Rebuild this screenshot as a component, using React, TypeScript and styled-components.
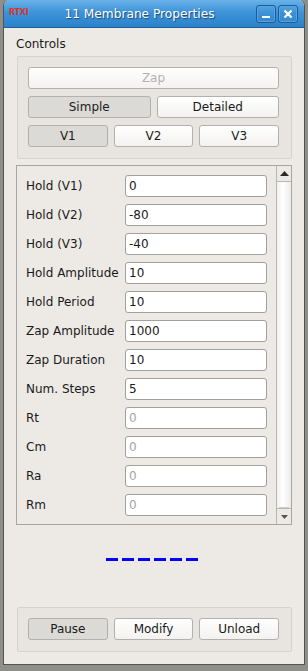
import React from 'react';
import styled, { createGlobalStyle } from 'styled-components';

const GlobalStyle = createGlobalStyle`
  html, body {
    margin: 0;
    padding: 0;
    background: #8e8e8a;
  }
  body {
    font-family: "DejaVu Sans", "Liberation Sans", sans-serif;
    font-size: 12px;
    color: #1a1a1a;
  }
`;

const Desktop = styled.div`
  width: 308px;
  height: 671px;
  padding-left: 3px;
  box-sizing: border-box;
`;

const Window = styled.div`
  width: 302px;
  height: 665px;
  box-sizing: border-box;
  border: 1px solid #55554f;
  border-top: none;
  border-radius: 6px 6px 0 0;
  overflow: hidden;
  display: flex;
  flex-direction: column;
  background: #edeae6;
`;

const TitleBar = styled.div`
  height: 28px;
  flex: none;
  display: flex;
  align-items: center;
  padding: 0 6px 0 5px;
  background: linear-gradient(#6ab2ea 0%, #3d93d8 45%, #2d83cb 100%);
  border-bottom: 1px solid #1f5f96;
  box-sizing: border-box;
`;

const Logo = styled.span`
  width: 26px;
  font-size: 8px;
  font-weight: bold;
  color: #d9362a;
  letter-spacing: -0.2px;
  padding-bottom: 2px;
`;

const Title = styled.div`
  flex: 1;
  text-align: center;
  color: #ffffff;
  font-size: 12.2px;
  text-shadow: 1px 1px 1px #1b4a78;
  padding-right: 10px;
`;

const TitleButton = styled.div`
  width: 18px;
  height: 16px;
  margin-left: 2px;
  border: 1px solid #1d5b92;
  border-radius: 3px;
  box-shadow: inset 0 0 0 1px #5aa3e0;
  display: flex;
  align-items: center;
  justify-content: center;
`;

const Body = styled.div`
  flex: 1;
  display: flex;
  flex-direction: column;
  padding: 8px 12px 12px 12px;
`;

const SectionLabel = styled.div`
  font-size: 12px;
  line-height: 16px;
  margin-bottom: 4px;
`;

const GroupBox = styled.div`
  margin: 0 0 0 1px;
  border: 1px solid #d6d3ce;
  border-radius: 2px;
  background: #e8e5e1;
  padding: 10px 12px 11px 10px;
  display: flex;
  flex-direction: column;
  gap: 7px;
`;

const ButtonRow = styled.div`
  display: flex;
  gap: 6px;
  height: 22px;
`;

const Button = styled.div<{ $checked?: boolean; $disabled?: boolean }>`
  flex: 1 1 0;
  height: 22px;
  box-sizing: border-box;
  border: 1px solid #b4b1ac;
  border-radius: 3px;
  background: ${(p) =>
    p.$checked ? '#dcdad6' : 'linear-gradient(#ffffff, #f3f2f0)'};
  color: ${(p) => (p.$disabled ? '#b3b1ad' : '#1a1a1a')};
  display: flex;
  align-items: center;
  justify-content: center;
  font-size: 12px;
`;

const ScrollArea = styled.div`
  margin-top: 6px;
  height: 360px;
  box-sizing: border-box;
  border: 1px solid #a9a6a1;
  display: flex;
`;

const FieldList = styled.div`
  flex: 1;
  padding: 9px 9px 0 9px;
  display: flex;
  flex-direction: column;
  gap: 7px;
`;

const FieldRow = styled.div`
  display: flex;
  align-items: center;
  height: 22px;
  flex: none;
`;

const FieldLabel = styled.div`
  width: 99px;
  font-size: 12px;
  white-space: nowrap;
`;

const Input = styled.div<{ $disabled?: boolean }>`
  width: 142px;
  height: 22px;
  box-sizing: border-box;
  border: 1px solid #a2a09c;
  border-radius: 3px;
  background: #ffffff;
  padding-left: 3px;
  display: flex;
  align-items: center;
  font-size: 12px;
  color: ${(p) => (p.$disabled ? '#a5a5a5' : '#1a1a1a')};
`;

const ScrollBar = styled.div`
  width: 15px;
  border-left: 1px solid #b9b6b1;
  display: flex;
  flex-direction: column;
  background: linear-gradient(90deg, #f0f0ef, #ffffff 40%, #ebebea);
`;

const ScrollArrow = styled.div<{ $down?: boolean }>`
  height: 15px;
  display: flex;
  align-items: center;
  justify-content: center;
  border-${(p) => (p.$down ? 'top' : 'bottom')}: 1px solid #b9b6b1;
  box-shadow: ${(p) => (p.$down ? '0 -3px 0 -2px #cfccc8' : 'none')};
  background: #ebeae7;
`;

const ScrollTrack = styled.div`
  flex: 1;
`;

const Indicator = styled.div`
  flex: 1;
  display: flex;
  justify-content: center;
  padding-top: 33px;
  padding-right: 4px;
  gap: 4px;
`;

const Dash = styled.span`
  width: 12px;
  height: 3px;
  background: #0000ff;
`;

const fields = [
  { label: 'Hold (V1)', value: '0' },
  { label: 'Hold (V2)', value: '-80' },
  { label: 'Hold (V3)', value: '-40' },
  { label: 'Hold Amplitude', value: '10' },
  { label: 'Hold Period', value: '10' },
  { label: 'Zap Amplitude', value: '1000' },
  { label: 'Zap Duration', value: '10' },
  { label: 'Num. Steps', value: '5' },
  { label: 'Rt', value: '0', disabled: true },
  { label: 'Cm', value: '0', disabled: true },
  { label: 'Ra', value: '0', disabled: true },
  { label: 'Rm', value: '0', disabled: true },
];

const App = () => {
  return (
    <Desktop>
      <GlobalStyle />
      <Window>
        <TitleBar>
          <Logo>RTXI</Logo>
          <Title>11 Membrane Properties</Title>
          <TitleButton>
            <svg width="10" height="10" viewBox="0 0 10 10">
              <rect x="1" y="7" width="8" height="2" fill="#ffffff" />
            </svg>
          </TitleButton>
          <TitleButton>
            <svg width="10" height="10" viewBox="0 0 10 10">
              <path d="M1.5 1.5 L8.5 8.5 M8.5 1.5 L1.5 8.5" stroke="#ffffff" strokeWidth="2.2" />
            </svg>
          </TitleButton>
        </TitleBar>
        <Body>
          <SectionLabel>Controls</SectionLabel>
          <GroupBox>
            <ButtonRow>
              <Button $disabled>Zap</Button>
            </ButtonRow>
            <ButtonRow>
              <Button $checked>Simple</Button>
              <Button>Detailed</Button>
            </ButtonRow>
            <ButtonRow>
              <Button $checked>V1</Button>
              <Button>V2</Button>
              <Button>V3</Button>
            </ButtonRow>
          </GroupBox>
          <ScrollArea>
            <FieldList>
              {fields.map((f, i) => (
                <FieldRow key={i}>
                  <FieldLabel>{f.label}</FieldLabel>
                  <Input $disabled={f.disabled}>{f.value}</Input>
                </FieldRow>
              ))}
            </FieldList>
            <ScrollBar>
              <ScrollArrow>
                <svg width="9" height="5" viewBox="0 0 9 5">
                  <path d="M0 5 L4.5 0 L9 5 Z" fill="#2a2a2a" />
                </svg>
              </ScrollArrow>
              <ScrollTrack />
              <ScrollArrow $down>
                <svg width="7" height="4" viewBox="0 0 7 4">
                  <path d="M0 0 L3.5 4 L7 0 Z" fill="#555555" />
                </svg>
              </ScrollArrow>
            </ScrollBar>
          </ScrollArea>
          <Indicator>
            {[0, 1, 2, 3, 4, 5].map((i) => (
              <Dash key={i} />
            ))}
          </Indicator>
          <GroupBox>
            <ButtonRow>
              <Button $checked>Pause</Button>
              <Button>Modify</Button>
              <Button>Unload</Button>
            </ButtonRow>
          </GroupBox>
        </Body>
      </Window>
    </Desktop>
  );
};

export default App;
